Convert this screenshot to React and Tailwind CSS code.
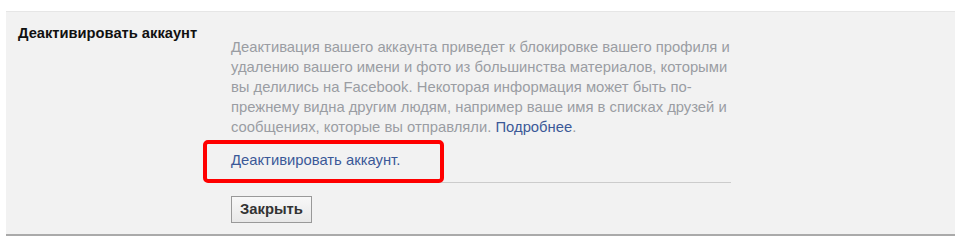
import React from 'react';

const App = () => {
    return (
        <div className="w-[962px] h-[244px] bg-white pt-[11px] font-['Liberation_Sans',Arial,sans-serif]">
            <div className="relative ml-[6px] w-[949px] flex bg-[#f2f2f2] border-t border-[#e6e6e6] border-b-2 border-b-[#aaaaaa] pb-[11px]">
                <div className="w-[225px] pl-[12px] pt-[14px]">
                    <h3 className="text-[14.7px] leading-[15px] font-bold text-[#111]">Деактивировать аккаунт</h3>
                </div>

                <div className="w-[520px] pt-[25px]">
                    <p className="text-[14.8px] leading-[20px] text-[#9a9da3]">
                        Деактивация вашего аккаунта приведет к блокировке вашего профиля и<br />
                        удалению вашего имени и фото из большинства материалов, которыми<br />
                        вы делились на Facebook. Некоторая информация может быть по-<br />
                        прежнему видна другим людям, например ваше имя в списках друзей и<br />
                        сообщениях, которые вы отправляли. <a className="text-[#3b5998]">Подробнее</a>.
                    </p>

                    <p className="mt-[13px] text-[14.8px] leading-[20px] text-[#3b5998]">
                        Деактивировать аккаунт.
                    </p>

                    <div className="mt-[12px] w-[500px] h-px bg-[#cccccc]" />

                    <button className="mt-[13px] h-[27px] px-[8px] border border-[#999] bg-gradient-to-b from-[#f8f8f8] to-[#e8e8e8] text-[14.8px] font-bold text-[#333]">
                        Закрыть
                    </button>
                </div>

                {/* red highlight annotation */}
                <div className="absolute left-[197px] top-[128px] w-[241px] h-[43px] border-[4px] border-[#ff0000] rounded-[5px]" />
            </div>
        </div>
    );
};

export default App;
